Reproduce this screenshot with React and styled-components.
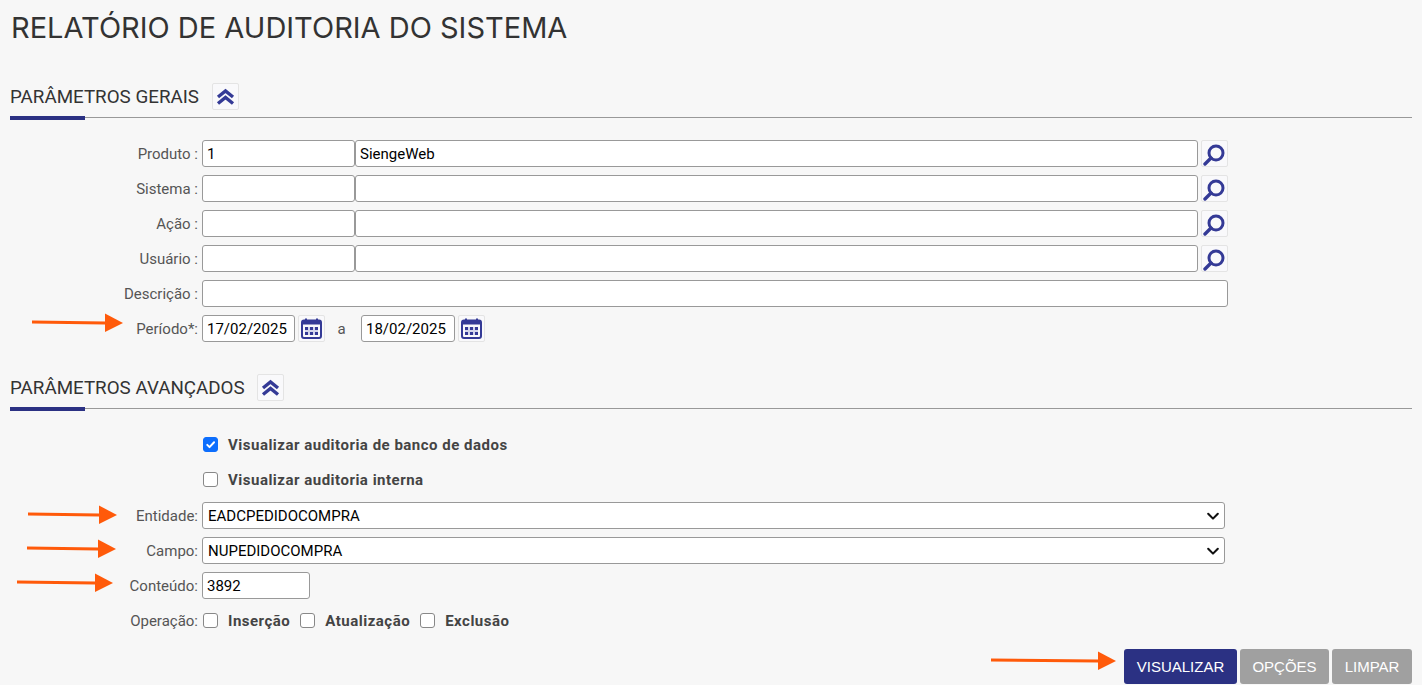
import { styled, createGlobalStyle } from 'styled-components'

const navy = '#2b3183'
const iconBlue = '#343a96'

const GlobalStyle = createGlobalStyle`
    html, body {
        margin: 0;
        height: 100%;
        background-color: #f7f7f7;
        overflow: hidden;
    }
`

const Page = styled.div`
    position: relative;
    height: 685px;
    box-sizing: border-box;
    padding: 0 10px;
    font-family: Roboto, "Liberation Sans", sans-serif;
    color: #555555;
    overflow: hidden;
`

const Title = styled.h1`
    margin: 0 0 0 1px;
    padding-top: 9px;
    height: 76px;
    box-sizing: border-box;
    font-family: Inter, "Liberation Sans", sans-serif;
    font-size: 29px;
    line-height: 38px;
    font-weight: 400;
    color: #333333;
`

const SectionHeader = styled.div`
    position: relative;
    display: flex;
    align-items: center;
    gap: 13px;
    height: 41px;
    border-bottom: 1px solid #999999;
    &::after {
        content: '';
        position: absolute;
        left: 0;
        bottom: -3px;
        width: 75px;
        height: 4px;
        background-color: ${navy};
    }
`

const SectionTitle = styled.div`
    font-size: 18.8px;
    color: #333333;
`

const IconButton = styled.button`
    flex: none;
    width: 27px;
    height: 27px;
    padding: 0;
    display: flex;
    align-items: center;
    justify-content: center;
    background-color: #f9f9fb;
    border: 1px solid #e4e4e4;
    border-radius: 2px;
`

const Form = styled.div`
    display: flex;
    flex-direction: column;
    gap: 8px;
    padding-top: 22px;
`

const Row = styled.div`
    display: flex;
    align-items: center;
    height: 27px;
`

const Label = styled.label`
    flex: none;
    width: 188px;
    margin-right: 4px;
    text-align: right;
    font-size: 15px;
    color: #555555;
`

const Input = styled.input`
    box-sizing: border-box;
    flex: ${(p) => (p.$grow ? '1' : 'none')};
    width: ${(p) => p.$width || 'auto'};
    min-width: 0;
    height: 27px;
    padding: 0 4px;
    background-color: #ffffff;
    border: 1px solid #999999;
    border-radius: 3px;
    font-family: Roboto, "Liberation Sans", sans-serif;
    font-size: 15px;
    color: #000000;
`

const LookupFields = styled.div`
    display: flex;
    width: 996px;
`

const WideField = styled.div`
    display: flex;
    width: 1026px;
`

const SearchButton = styled(IconButton)`
    margin-left: 3px;
`

const CalendarButton = styled(IconButton)`
    margin-left: 3px;
`

const Separator = styled.span`
    width: 36px;
    padding-right: 3px;
    box-sizing: border-box;
    text-align: center;
    font-size: 15px;
    color: #555555;
`

const AdvancedHeader = styled(SectionHeader)`
    margin-top: 25px;
    gap: 12px;
`

const AdvancedForm = styled(Form)`
    padding-top: 9px;
`

const CheckRows = styled.div`
    display: flex;
    flex-direction: column;
    gap: 8px;
    padding: 22px 0 0 192px;
`

const CheckRow = styled.div`
    display: flex;
    align-items: center;
    height: 27px;
`

const Checkbox = styled.input.attrs({ type: 'checkbox' })`
    appearance: none;
    flex: none;
    box-sizing: border-box;
    width: 15px;
    height: 15px;
    margin: 0 0 0 1px;
    background-color: #ffffff;
    border: 1px solid #888888;
    border-radius: 3px;
    &:checked {
        border-color: #0d6efd;
        background-color: #0d6efd;
        background-image: url("data:image/svg+xml,%3Csvg xmlns='http://www.w3.org/2000/svg' viewBox='0 0 20 20'%3E%3Cpath fill='none' stroke='%23fff' stroke-linecap='round' stroke-linejoin='round' stroke-width='3' d='m5 10.5 3.5 3.5 7-7.5'/%3E%3C/svg%3E");
    }
`

const CheckText = styled.span`
    margin-left: 10px;
    font-size: 15px;
    font-weight: 700;
    letter-spacing: 0.5px;
    color: #444444;
`

const OperationItem = styled.span`
    display: flex;
    align-items: center;
    margin-right: 9px;
`

const Select = styled.select`
    appearance: none;
    box-sizing: border-box;
    width: 1023px;
    height: 27px;
    padding: 0 4px 0 5px;
    background-color: #ffffff;
    background-image: url("data:image/svg+xml,%3Csvg xmlns='http://www.w3.org/2000/svg' viewBox='0 0 16 16'%3E%3Cpath fill='none' stroke='%23111' stroke-linecap='round' stroke-linejoin='round' stroke-width='2.4' d='m2.5 5.5 5.5 5.5 5.5-5.5'/%3E%3C/svg%3E");
    background-repeat: no-repeat;
    background-position: right 4px center;
    background-size: 14px 14px;
    border: 1px solid #999999;
    border-radius: 3px;
    font-family: Roboto, "Liberation Sans", sans-serif;
    font-size: 15px;
    color: #000000;
`

const Actions = styled.div`
    position: absolute;
    right: 10px;
    bottom: 1px;
    display: flex;
    gap: 3px;
`

const ActionButton = styled.button`
    height: 35px;
    width: ${(p) => p.$width};
    padding: 0;
    border: none;
    border-radius: 3px;
    background-color: ${(p) => (p.$primary ? navy : '#a0a0a0')};
    color: #ffffff;
    font-family: "Liberation Sans", Arial, sans-serif;
    font-size: 15px;
`

const Arrow = styled.svg`
    position: absolute;
    left: ${(p) => p.$x}px;
    top: ${(p) => p.$y}px;
    width: ${(p) => p.$w}px;
    height: 20px;
    overflow: visible;
`

function OrangeArrow({ x, y, w }) {
    return (
        <Arrow $x={x} $y={y} $w={w} viewBox={`0 0 ${w} 20`}>
            <path d={`M0 7.6 L${w - 18} 8.6 L${w - 18} 11.4 L0 10.6 Z`} fill="#ff5a0a" />
            <path d={`M${w - 18} 0.5 L${w} 10 L${w - 18} 19 Z`} fill="#ff5a0a" />
        </Arrow>
    )
}

function CollapseIcon() {
    return (
        <svg width="19" height="18" viewBox="0 0 19 18">
            <path d="M2 9 9.5 3 17 9M2 15.5 9.5 9.5 17 15.5" fill="none" stroke={iconBlue} strokeWidth="3.4" />
        </svg>
    )
}

function SearchIcon() {
    return (
        <svg width="25" height="25" viewBox="0 0 25 25">
            <circle cx="14" cy="12" r="7" fill="none" stroke={iconBlue} strokeWidth="3" />
            <path d="M9 17 3 23" fill="none" stroke={iconBlue} strokeWidth="3.4" strokeLinecap="round" />
        </svg>
    )
}

function CalendarIcon() {
    return (
        <svg width="21" height="21" viewBox="0 0 21 21">
            <path d="M5 0.5v3M16 0.5v3" stroke={iconBlue} strokeWidth="2" />
            <rect x="1" y="2.5" width="19" height="17.5" rx="2" fill="none" stroke={iconBlue} strokeWidth="2" />
            <rect x="1" y="2.5" width="19" height="4" fill={iconBlue} />
            <rect x="4" y="9" width="13" height="8" fill="#d4d6ec" />
            <path d="M4 9h3v3H4zM9 9h3v3H9zM14 9h3v3h-3zM4 14h3v3H4zM9 14h3v3H9zM14 14h3v3h-3z" fill={iconBlue} />
        </svg>
    )
}

const lookups = [
    { label: 'Produto :', code: '1', text: 'SiengeWeb' },
    { label: 'Sistema :', code: '', text: '' },
    { label: 'Ação :', code: '', text: '' },
    { label: 'Usuário :', code: '', text: '' },
]

function App() {
    return (
        <Page>
            <GlobalStyle />
            <Title>RELATÓRIO DE AUDITORIA DO SISTEMA</Title>

            <SectionHeader>
                <SectionTitle>PARÂMETROS GERAIS</SectionTitle>
                <IconButton><CollapseIcon /></IconButton>
            </SectionHeader>
            <Form>
                {lookups.map((item) => (
                    <Row key={item.label}>
                        <Label>{item.label}</Label>
                        <LookupFields>
                            <Input $width="153px" defaultValue={item.code} />
                            <Input $grow defaultValue={item.text} />
                        </LookupFields>
                        <SearchButton><SearchIcon /></SearchButton>
                    </Row>
                ))}
                <Row>
                    <Label>Descrição :</Label>
                    <WideField><Input $grow /></WideField>
                </Row>
                <Row>
                    <Label>Período*:</Label>
                    <Input $width="93px" defaultValue="17/02/2025" />
                    <CalendarButton><CalendarIcon /></CalendarButton>
                    <Separator>a</Separator>
                    <Input $width="94px" defaultValue="18/02/2025" />
                    <CalendarButton><CalendarIcon /></CalendarButton>
                </Row>
            </Form>

            <AdvancedHeader>
                <SectionTitle>PARÂMETROS AVANÇADOS</SectionTitle>
                <IconButton><CollapseIcon /></IconButton>
            </AdvancedHeader>
            <CheckRows>
                <CheckRow>
                    <Checkbox defaultChecked />
                    <CheckText>Visualizar auditoria de banco de dados</CheckText>
                </CheckRow>
                <CheckRow>
                    <Checkbox />
                    <CheckText>Visualizar auditoria interna</CheckText>
                </CheckRow>
            </CheckRows>
            <AdvancedForm>
                <Row>
                    <Label>Entidade:</Label>
                    <Select defaultValue="EADCPEDIDOCOMPRA">
                        <option>EADCPEDIDOCOMPRA</option>
                    </Select>
                </Row>
                <Row>
                    <Label>Campo:</Label>
                    <Select defaultValue="NUPEDIDOCOMPRA">
                        <option>NUPEDIDOCOMPRA</option>
                    </Select>
                </Row>
                <Row>
                    <Label>Conteúdo:</Label>
                    <Input $width="108px" defaultValue="3892" />
                </Row>
                <Row>
                    <Label>Operação:</Label>
                    <OperationItem><Checkbox /><CheckText>Inserção</CheckText></OperationItem>
                    <OperationItem><Checkbox /><CheckText>Atualização</CheckText></OperationItem>
                    <OperationItem><Checkbox /><CheckText>Exclusão</CheckText></OperationItem>
                </Row>
            </AdvancedForm>

            <Actions>
                <ActionButton $primary $width="113px">VISUALIZAR</ActionButton>
                <ActionButton $width="89px">OPÇÕES</ActionButton>
                <ActionButton $width="80px">LIMPAR</ActionButton>
            </Actions>

            <OrangeArrow x={32} y={313} w={91} />
            <OrangeArrow x={28} y={505} w={89} />
            <OrangeArrow x={27} y={539} w={89} />
            <OrangeArrow x={17} y={573} w={96} />
            <OrangeArrow x={991} y={651} w={125} />
        </Page>
    )
}

export default App
